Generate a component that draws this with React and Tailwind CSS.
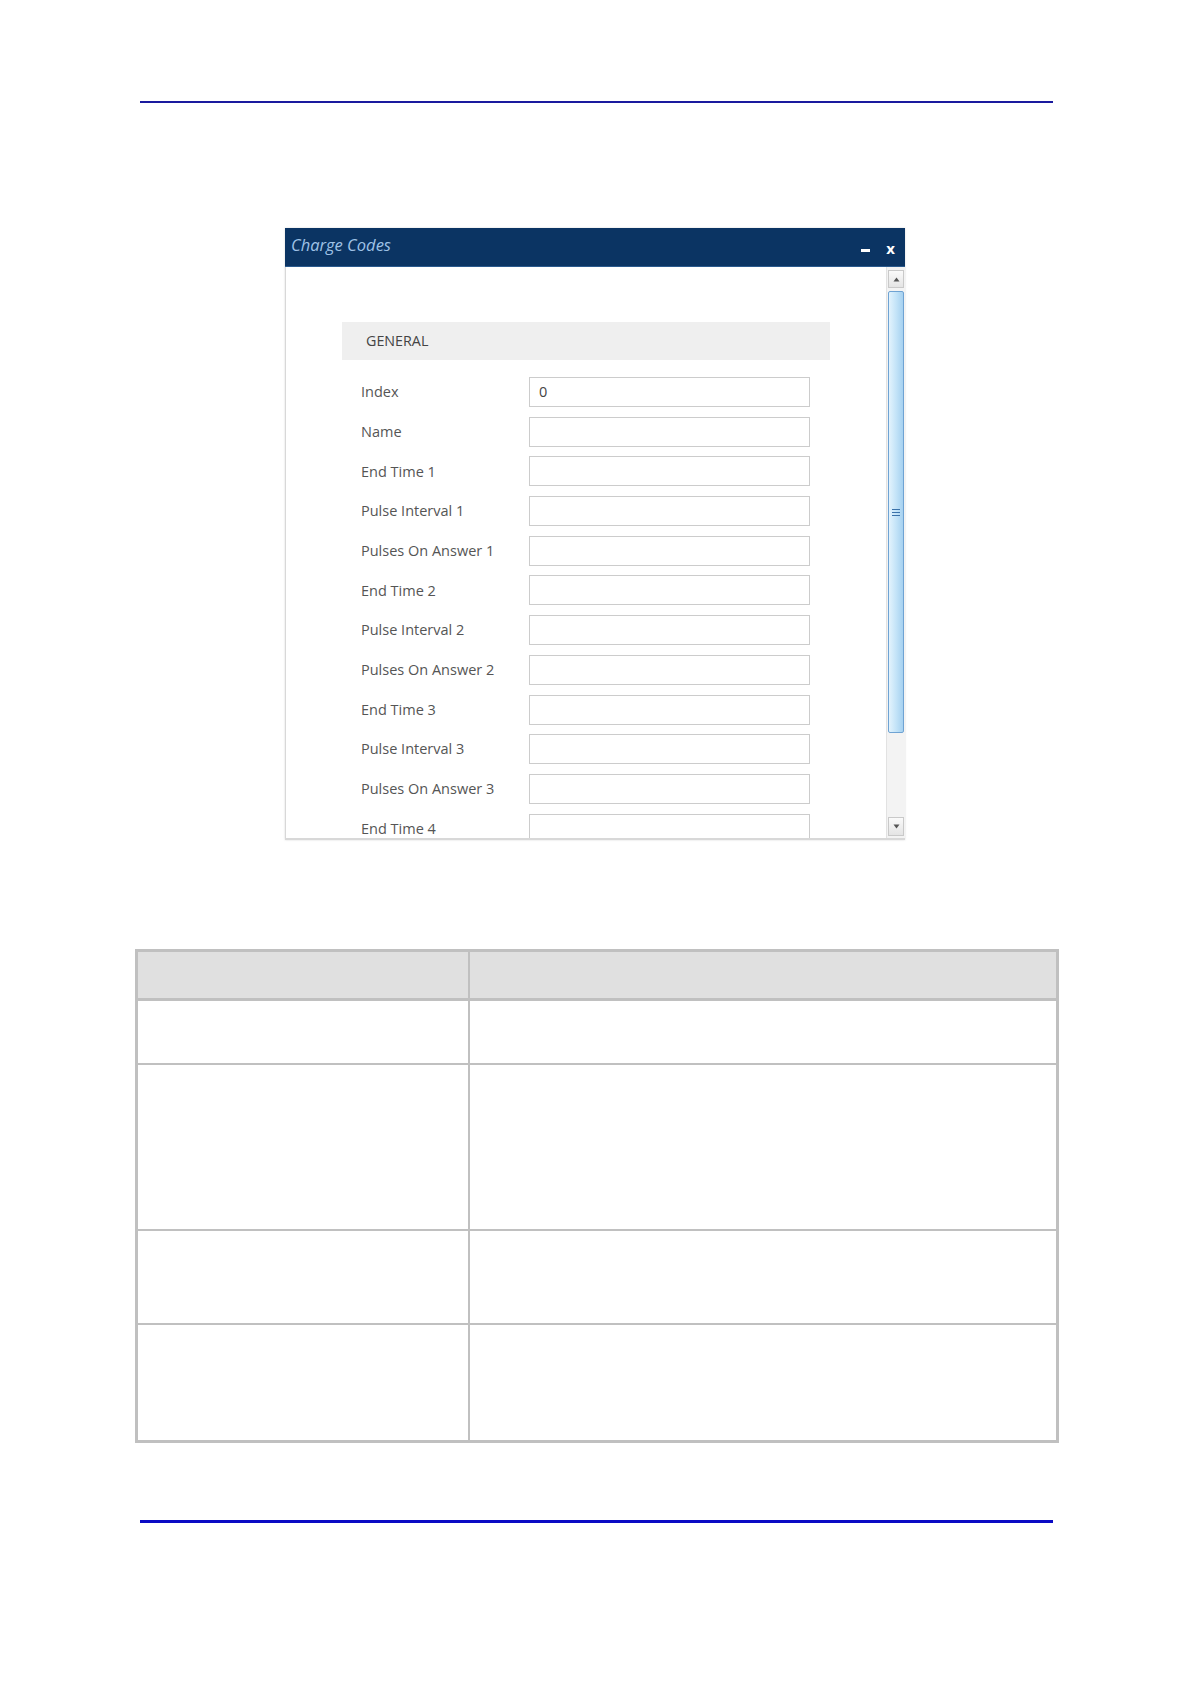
import React from 'react';

const fields = [
  { label: 'Index', value: '0' },
  { label: 'Name' },
  { label: 'End Time 1' },
  { label: 'Pulse Interval 1' },
  { label: 'Pulses On Answer 1' },
  { label: 'End Time 2' },
  { label: 'Pulse Interval 2' },
  { label: 'Pulses On Answer 2' },
  { label: 'End Time 3' },
  { label: 'Pulse Interval 3' },
  { label: 'Pulses On Answer 3' },
  { label: 'End Time 4' }
];

const rowHeights = ['h-[64px]', 'h-[166px]', 'h-[94px]', 'h-[115px]'];

function Scrollbar() {
  return (
    <div className="w-[19px] flex flex-col bg-[#f3f3f3] border-l border-[#e2e2e2] pt-[3px] pb-[2px]">
      <div className="mx-[1px] h-[18px] border border-[#c9c9c9] bg-gradient-to-b from-[#fafafa] to-[#e4e4e4] flex items-center justify-center">
        <svg width="7" height="5" viewBox="0 0 7 5"><path d="M0.5 4.5 L3.5 0.5 L6.5 4.5 Z" fill="#555" /></svg>
      </div>
      <div className="mx-[1px] mt-[3px] h-[442px] border border-[#6fa3d3] bg-gradient-to-r from-[#e3f3fd] via-[#c4e4f8] to-[#a6d1f0] rounded-[2px] flex items-center justify-center">
        <div className="flex flex-col gap-[2px]">
          <div className="w-[8px] h-[1px] bg-[#3a72aa]" />
          <div className="w-[8px] h-[1px] bg-[#3a72aa]" />
          <div className="w-[8px] h-[1px] bg-[#3a72aa]" />
        </div>
      </div>
      <div className="flex-1" />
      <div className="mx-[1px] h-[19px] border border-[#c9c9c9] bg-gradient-to-b from-[#fafafa] to-[#e4e4e4] flex items-center justify-center">
        <svg width="7" height="5" viewBox="0 0 7 5"><path d="M0.5 0.5 L3.5 4.5 L6.5 0.5 Z" fill="#555" /></svg>
      </div>
    </div>
  );
}

export default function App() {
  return (
    <div className="w-[1191px] min-h-[1683px] bg-white pt-[101px] font-['Open_Sans','Liberation_Sans',sans-serif]">
      {/* Header rule */}
      <div className="ml-[140px] w-[913px] h-[2px] bg-[#1a1a9e]" />

      {/* Charge Codes dialog */}
      <div className="ml-[285px] mt-[125px] w-[620px] h-[612px] flex flex-col shadow-[0_0_2px_rgba(0,0,0,0.15)]">
        <div className="h-[39px] bg-[#0b3463] flex items-center justify-between pl-[6px] pr-[10px] border-b border-[#2a5a8e]">
          <span className="italic text-[16.5px] text-[#9fc2e6] -mt-[4px]">Charge Codes</span>
          <div className="flex items-center gap-[16px] text-white font-bold text-[15px] mt-[3px]">
            <span className="block w-[9px] h-[3px] bg-white mt-[3px]" />
            <span className="leading-none">x</span>
          </div>
        </div>
        <div className="flex-1 flex border-b-2 border-l border-[#d8d8d8] overflow-hidden">
          <div className="flex-1 overflow-hidden pt-[55px] pl-[56px]">
            <div className="w-[488px] h-[38px] bg-[#efefef] flex items-center pl-[24px] text-[14.3px] text-[#444]">
              GENERAL
            </div>
            <div className="pt-[17px]">
              {fields.map((f) => (
                <div key={f.label} className="flex items-center h-[30px] mb-[9.7px]">
                  <div className="w-[187px] pl-[19px] text-[14.5px] text-[#555] whitespace-nowrap">{f.label}</div>
                  <div className="w-[281px] h-[30px] border border-[#cccccc] bg-white flex items-center pl-[9px] text-[14.5px] text-[#444]">
                    {f.value || ''}
                  </div>
                </div>
              ))}
            </div>
          </div>
          <Scrollbar />
        </div>
      </div>

      {/* Parameter table (empty) */}
      <div className="ml-[135px] mt-[109px] w-[924px] border-[3px] border-[#c0c0c0] bg-white">
        <div className="flex h-[49px] bg-[#e0e0e0] border-b-[3px] border-[#c0c0c0]">
          <div className="w-[332px] border-r-2 border-[#c0c0c0]" />
          <div className="flex-1" />
        </div>
        {rowHeights.map((h, i) => (
          <div key={i} className={`flex ${h} ${i < rowHeights.length - 1 ? 'border-b-2 border-[#c0c0c0]' : ''}`}>
            <div className="w-[332px] border-r-2 border-[#c0c0c0]" />
            <div className="flex-1" />
          </div>
        ))}
      </div>

      {/* Footer rule */}
      <div className="ml-[140px] mt-[77px] w-[913px] h-[3px] bg-[#0a0ac4]" />
    </div>
  );
}
